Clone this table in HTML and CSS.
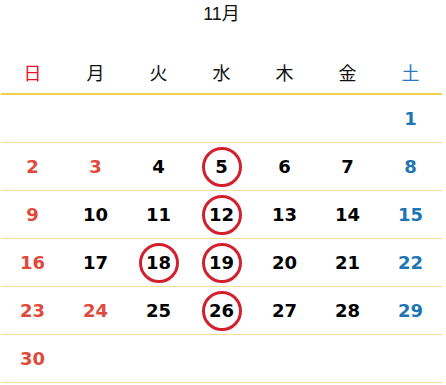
FILE: index.html
```html
<!DOCTYPE html>
<html lang="ja">
<head>
<meta charset="utf-8">
<title>11月</title>
<link rel="stylesheet" href="styles.css">
</head>
<body>
<div class="calendar">
  <div class="title">11月</div>
  <div class="row head">
    <div class="cell sun">日</div><div class="cell">月</div><div class="cell">火</div><div class="cell">水</div><div class="cell">木</div><div class="cell">金</div><div class="cell sat">土</div>
  </div>
  <div class="row">
    <div class="cell"></div><div class="cell"></div><div class="cell"></div><div class="cell"></div><div class="cell"></div><div class="cell"></div><div class="cell sat">1</div>
  </div>
  <div class="row">
    <div class="cell sun">2</div><div class="cell sun">3</div><div class="cell">4</div><div class="cell"><span class="mark">5</span></div><div class="cell">6</div><div class="cell">7</div><div class="cell sat">8</div>
  </div>
  <div class="row">
    <div class="cell sun">9</div><div class="cell">10</div><div class="cell">11</div><div class="cell"><span class="mark">12</span></div><div class="cell">13</div><div class="cell">14</div><div class="cell sat">15</div>
  </div>
  <div class="row">
    <div class="cell sun">16</div><div class="cell">17</div><div class="cell"><span class="mark">18</span></div><div class="cell"><span class="mark">19</span></div><div class="cell">20</div><div class="cell">21</div><div class="cell sat">22</div>
  </div>
  <div class="row">
    <div class="cell sun">23</div><div class="cell sun">24</div><div class="cell">25</div><div class="cell"><span class="mark">26</span></div><div class="cell">27</div><div class="cell">28</div><div class="cell sat">29</div>
  </div>
  <div class="row">
    <div class="cell sun">30</div><div class="cell"></div><div class="cell"></div><div class="cell"></div><div class="cell"></div><div class="cell"></div><div class="cell"></div>
  </div>
</div>
</body>
</html>
```
FILE: styles.css
```css
html, body {
  margin: 0;
  padding: 0;
  background: #ffffff;
}
.calendar {
  width: 441px;
  margin-left: 1px;
}
.title {
  height: 28px;
  line-height: 28px;
  text-align: center;
  font-family: "Liberation Sans", "Noto Sans CJK JP", sans-serif;
  font-size: 18px;
  color: #111;
}
.row {
  display: grid;
  grid-template-columns: repeat(7, 63px);
  height: 47px;
  align-items: center;
  border-bottom: 1px solid #f4dd96;
  font-family: "DejaVu Sans", sans-serif;
  font-weight: bold;
  font-size: 18px;
  color: #000;
}
.row .cell {
  text-align: center;
  display: flex;
  justify-content: center;
  align-items: center;
  height: 100%;
}
.row .sun { color: #e04a3c; }
.row .sat { color: #1d76b3; }
.head {
  height: 65px;
  border-bottom: 2px solid #f1d34a;
  font-family: "Noto Sans CJK JP", sans-serif;
  font-weight: normal;
  font-size: 18px;
  color: #111;
}
.head .cell {
  align-items: flex-end;
  padding-bottom: 11px;
  line-height: 20px;
  box-sizing: border-box;
}
.head .sun { color: #e3122c; }
.head .sat { color: #2a79c2; }
.mark {
  width: 34px;
  height: 34px;
  border: 3px solid #d3202f;
  border-radius: 50%;
  display: flex;
  justify-content: center;
  align-items: center;
  line-height: 1;
}
```
